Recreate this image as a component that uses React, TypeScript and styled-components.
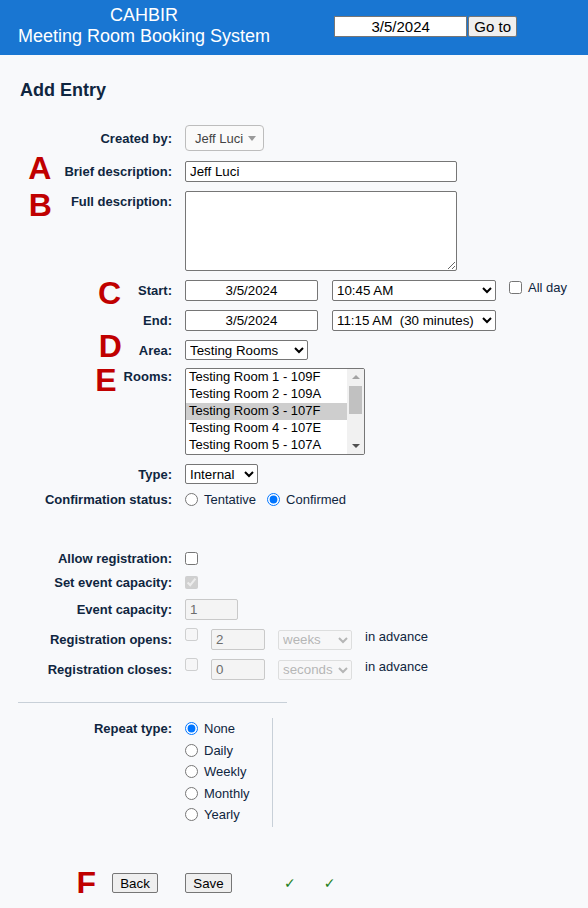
import React from "react";
import styled, { createGlobalStyle } from "styled-components";

const GlobalStyle = createGlobalStyle`
  html, body { margin: 0; padding: 0; background: #f8f9fb; }
  body {
    font-family: "Liberation Sans", Arial, sans-serif;
    font-size: 13px;
    color: #0f2640;
  }
  * { box-sizing: border-box; }
`;

const Header = styled.header`
  display: flex;
  align-items: flex-start;
  height: 55px;
  background: #1976d2;
  color: #fff;
`;

const Title = styled.div`
  margin: 5px 0 0 18px;
  text-align: center;
  font-size: 18px;
  line-height: 21px;
`;

const GoForm = styled.div`
  display: flex;
  margin: 16px 0 0 64px;
`;

const GoInput = styled.input`
  width: 133px;
  height: 21px;
  margin: 0;
  padding: 0;
  border: 1px solid #767676;
  background: #fff;
  color: #000;
  font: 15px "Liberation Sans", Arial, sans-serif;
  text-align: center;
`;

const GoButton = styled.button`
  width: 49px;
  height: 21px;
  margin: 0 0 0 1px;
  padding: 0;
  border: 1px solid #767676;
  border-radius: 2px;
  background: #efefef;
  color: #000;
  font: 15px "Liberation Sans", Arial, sans-serif;
`;

const Main = styled.main`
  padding-top: 25px;
`;

const Heading = styled.h2`
  margin: 0 0 0 20px;
  font-size: 18px;
  line-height: 21px;
  font-weight: bold;
  color: #0f2640;
`;

const Row = styled.div<{ $mt: number; $align?: "center" | "start" }>`
  display: grid;
  grid-template-columns: 172px auto;
  column-gap: 13px;
  align-items: ${(p) => (p.$align === "start" ? "start" : "center")};
  margin-top: ${(p) => p.$mt}px;
`;

const Label = styled.div<{ $pr?: number }>`
  display: flex;
  justify-content: flex-end;
  align-items: flex-start;
  padding-right: ${(p) => p.$pr ?? 0}px;
`;

const LabelText = styled.span<{ $pt?: number }>`
  font-weight: bold;
  line-height: 15px;
  padding-top: ${(p) => p.$pt ?? 0}px;
  white-space: nowrap;
`;

const Letter = styled.span<{ $mt: number; $mr: number }>`
  display: block;
  height: 0;
  overflow: visible;
  margin-top: ${(p) => p.$mt}px;
  margin-right: ${(p) => p.$mr}px;
  color: #c00000;
  font: bold 32px/23px "Liberation Sans", Arial, sans-serif;
`;

const Field = styled.div<{ $gap?: number; $align?: "center" | "flex-start"; $h?: number }>`
  display: flex;
  align-items: ${(p) => p.$align ?? "center"};
  gap: ${(p) => p.$gap ?? 0}px;
  height: ${(p) => (p.$h ? `${p.$h}px` : "auto")};
`;

const TextInput = styled.input<{ $w: number; $center?: boolean }>`
  display: block;
  width: ${(p) => p.$w}px;
  height: 21px;
  margin: 0;
  padding: 0 4px;
  border: 1px solid #767676;
  border-radius: 2px;
  background: #fff;
  color: #000;
  font: 13.33px "Liberation Sans", Arial, sans-serif;
  text-align: ${(p) => (p.$center ? "center" : "left")};
  &:disabled {
    background: #f4f4f4;
    border-color: #c9c9c9;
    color: #6d6d6d;
  }
`;

const TextArea = styled.textarea`
  display: block;
  width: 272px;
  height: 80px;
  margin: 0;
  border: 1px solid #767676;
  border-radius: 2px;
  background: #fff;
  font: 13.33px "Liberation Sans", Arial, sans-serif;
`;

const Select = styled.select<{ $w: number; $h?: number }>`
  display: block;
  width: ${(p) => p.$w}px;
  height: ${(p) => p.$h ?? 21}px;
  margin: 0;
  border: 1px solid #767676;
  border-radius: 2px;
  background: #fff;
  color: #000;
  font: 13.33px "Liberation Sans", Arial, sans-serif;
  &:disabled {
    background: #f7f7f7;
    border-color: #d3d3d3;
    color: #9a9a9a;
  }
`;

const FancySelect = styled.div`
  display: flex;
  align-items: center;
  justify-content: space-between;
  width: 79px;
  height: 26px;
  padding: 0 7px 0 9px;
  border: 1px solid #bdbdbd;
  border-radius: 4px;
  background: #fafafa;
  color: #444;
  font-size: 13px;
`;

const Caret = styled.span`
  width: 0;
  height: 0;
  border-left: 4px solid transparent;
  border-right: 4px solid transparent;
  border-top: 5px solid #9a9a9a;
`;

const Box = styled.input`
  display: block;
  width: 13px;
  height: 13px;
  margin: 0;
`;

const BoxTop = styled(Box)<{ $mt?: number }>`
  align-self: flex-start;
  margin-top: ${(p) => p.$mt ?? 0}px;
`;

const Option = styled.label<{ $h?: number; $ml?: number }>`
  display: flex;
  align-items: center;
  gap: 6px;
  height: ${(p) => (p.$h ? `${p.$h}px` : "auto")};
  margin-left: ${(p) => p.$ml ?? 0}px;
  line-height: 15px;
  color: #0f2640;
`;

const TopText = styled.span<{ $ml?: number }>`
  align-self: flex-start;
  margin-left: ${(p) => p.$ml ?? 0}px;
  line-height: 15px;
  white-space: nowrap;
`;

const AllDay = styled.label`
  display: flex;
  align-items: flex-start;
  gap: 6px;
  align-self: flex-start;
  margin-left: -1px;
  line-height: 15px;
  & > input { margin-top: 1px; }
`;

const ListBox = styled.div`
  display: flex;
  width: 180px;
  height: 87px;
  border: 1px solid #767676;
  border-radius: 2px;
  background: #fff;
  overflow: hidden;
`;

const ListItems = styled.div`
  flex: 1;
`;

const ListItem = styled.div<{ $selected?: boolean }>`
  height: 17px;
  line-height: 15px;
  padding-left: 3px;
  color: #000;
  font-size: 13px;
  white-space: nowrap;
  background: ${(p) => (p.$selected ? "#cecece" : "transparent")};
`;

const Scrollbar = styled.div`
  display: flex;
  flex-direction: column;
  align-items: center;
  width: 17px;
  background: #f1f1f1;
`;

const ArrowCell = styled.div`
  display: flex;
  align-items: center;
  justify-content: center;
  width: 100%;
  height: 16px;
`;

const ArrowUp = styled.span`
  width: 0;
  height: 0;
  border-left: 4px solid transparent;
  border-right: 4px solid transparent;
  border-bottom: 4px solid #a3a3a3;
`;

const ArrowDown = styled.span`
  width: 0;
  height: 0;
  border-left: 4px solid transparent;
  border-right: 4px solid transparent;
  border-top: 4px solid #505050;
`;

const Track = styled.div`
  flex: 1;
  width: 100%;
  padding: 1px 2px;
`;

const Thumb = styled.div`
  width: 100%;
  height: 28px;
  background: #c1c1c1;
`;

const Rule = styled.hr`
  width: 269px;
  height: 0;
  margin: 22px 0 0 18px;
  border: 0;
  border-top: 1px solid #c8d0d8;
`;

const RepeatOptions = styled.div`
  display: flex;
  flex-direction: column;
  width: 88px;
  height: 109px;
  border-right: 1px solid #c8d0d8;
`;

const Button = styled.button<{ $w: number }>`
  width: ${(p) => p.$w}px;
  height: 20px;
  margin: 0;
  padding: 0;
  border: 1px solid #767676;
  border-radius: 2px;
  background: #efefef;
  color: #000;
  font: 13.33px "Liberation Sans", Arial, sans-serif;
`;

const Tick = styled.span<{ $ml: number }>`
  margin-left: ${(p) => p.$ml}px;
  color: #1d7f1d;
  font: 14px "DejaVu Sans", sans-serif;
  line-height: 15px;
`;

const rooms = [
  "Testing Room 1 - 109F",
  "Testing Room 2 - 109A",
  "Testing Room 3 - 107F",
  "Testing Room 4 - 107E",
  "Testing Room 5 - 107A",
];

export default function App() {
  return (
    <>
      <GlobalStyle />
      <Header>
        <Title>
          CAHBIR
          <br />
          Meeting Room Booking System
        </Title>
        <GoForm>
          <GoInput defaultValue="3/5/2024" />
          <GoButton>Go to</GoButton>
        </GoForm>
      </Header>
      <Main>
        <Heading>Add Entry</Heading>

        <Row $mt={24}>
          <Label>
            <LabelText>Created by:</LabelText>
          </Label>
          <Field>
            <FancySelect>
              <span>Jeff Luci</span>
              <Caret />
            </FancySelect>
          </Field>
        </Row>

        <Row $mt={10}>
          <Label>
            <Letter $mt={-7} $mr={13}>A</Letter>
            <LabelText>Brief description:</LabelText>
          </Label>
          <Field>
            <TextInput $w={272} defaultValue="Jeff Luci" />
          </Field>
        </Row>

        <Row $mt={9} $align="start">
          <Label>
            <Letter $mt={3} $mr={19}>B</Letter>
            <LabelText $pt={3}>Full description:</LabelText>
          </Label>
          <Field>
            <TextArea />
          </Field>
        </Row>

        <Row $mt={9}>
          <Label>
            <Letter $mt={-1} $mr={17}>C</Letter>
            <LabelText>Start:</LabelText>
          </Label>
          <Field $gap={14}>
            <TextInput $w={133} $center defaultValue="3/5/2024" />
            <Select $w={164} defaultValue="a">
              <option value="a">10:45 AM</option>
            </Select>
            <AllDay>
              <Box type="checkbox" />
              All day
            </AllDay>
          </Field>
        </Row>

        <Row $mt={9}>
          <Label>
            <LabelText>End:</LabelText>
          </Label>
          <Field $gap={14}>
            <TextInput $w={133} $center defaultValue="3/5/2024" />
            <Select $w={164} defaultValue="a">
              <option value="a">11:15 AM{"\u00a0"} (30 minutes)</option>
            </Select>
          </Field>
        </Row>

        <Row $mt={9}>
          <Label>
            <Letter $mt={-8} $mr={17}>D</Letter>
            <LabelText>Area:</LabelText>
          </Label>
          <Field>
            <Select $w={123} $h={20} defaultValue="a">
              <option value="a">Testing Rooms</option>
            </Select>
          </Field>
        </Row>

        <Row $mt={8} $align="start">
          <Label>
            <Letter $mt={1} $mr={7}>E</Letter>
            <LabelText $pt={1}>Rooms:</LabelText>
          </Label>
          <Field>
            <ListBox>
              <ListItems>
                {rooms.map((r, i) => (
                  <ListItem key={r} $selected={i === 2}>
                    {r}
                  </ListItem>
                ))}
              </ListItems>
              <Scrollbar>
                <ArrowCell>
                  <ArrowUp />
                </ArrowCell>
                <Track>
                  <Thumb />
                </Track>
                <ArrowCell>
                  <ArrowDown />
                </ArrowCell>
              </Scrollbar>
            </ListBox>
          </Field>
        </Row>

        <Row $mt={9}>
          <Label>
            <LabelText>Type:</LabelText>
          </Label>
          <Field>
            <Select $w={73} $h={20} defaultValue="a">
              <option value="a">Internal</option>
            </Select>
          </Field>
        </Row>

        <Row $mt={5}>
          <Label>
            <LabelText>Confirmation status:</LabelText>
          </Label>
          <Field>
            <Option $h={20}>
              <Box type="radio" name="conf" />
              Tentative
            </Option>
            <Option $h={20} $ml={11}>
              <Box type="radio" name="conf" defaultChecked />
              Confirmed
            </Option>
          </Field>
        </Row>

        <Row $mt={39}>
          <Label>
            <LabelText>Allow registration:</LabelText>
          </Label>
          <Field $h={20}>
            <Box type="checkbox" />
          </Field>
        </Row>

        <Row $mt={4}>
          <Label>
            <LabelText>Set event capacity:</LabelText>
          </Label>
          <Field $h={20}>
            <Box type="checkbox" defaultChecked disabled />
          </Field>
        </Row>

        <Row $mt={7}>
          <Label>
            <LabelText>Event capacity:</LabelText>
          </Label>
          <Field>
            <TextInput $w={53} defaultValue="1" disabled />
          </Field>
        </Row>

        <Row $mt={9}>
          <Label>
            <LabelText>Registration opens:</LabelText>
          </Label>
          <Field $gap={13}>
            <BoxTop type="checkbox" disabled $mt={-1} />
            <TextInput $w={54} defaultValue="2" disabled />
            <Select $w={74} $h={20} defaultValue="w" disabled>
              <option value="w">weeks</option>
            </Select>
            <TopText>in advance</TopText>
          </Field>
        </Row>

        <Row $mt={9}>
          <Label>
            <LabelText>Registration closes:</LabelText>
          </Label>
          <Field $gap={13}>
            <BoxTop type="checkbox" disabled $mt={-1} />
            <TextInput $w={54} defaultValue="0" disabled />
            <Select $w={74} $h={20} defaultValue="s" disabled>
              <option value="s">seconds</option>
            </Select>
            <TopText>in advance</TopText>
          </Field>
        </Row>

        <Rule />

        <Row $mt={15} $align="start">
          <Label>
            <LabelText $pt={3}>Repeat type:</LabelText>
          </Label>
          <RepeatOptions>
            {["None", "Daily", "Weekly", "Monthly", "Yearly"].map((t, i) => (
              <Option key={t} $h={21.5}>
                <Box type="radio" name="rep" defaultChecked={i === 0} />
                {t}
              </Option>
            ))}
          </RepeatOptions>
        </Row>

        <Row $mt={46}>
          <Label $pr={14}>
            <Letter $mt={-1} $mr={16}>F</Letter>
            <Button $w={46}>Back</Button>
          </Label>
          <Field>
            <Button $w={47}>Save</Button>
            <Tick $ml={52}>✓</Tick>
            <Tick $ml={28}>✓</Tick>
          </Field>
        </Row>
      </Main>
    </>
  );
}
